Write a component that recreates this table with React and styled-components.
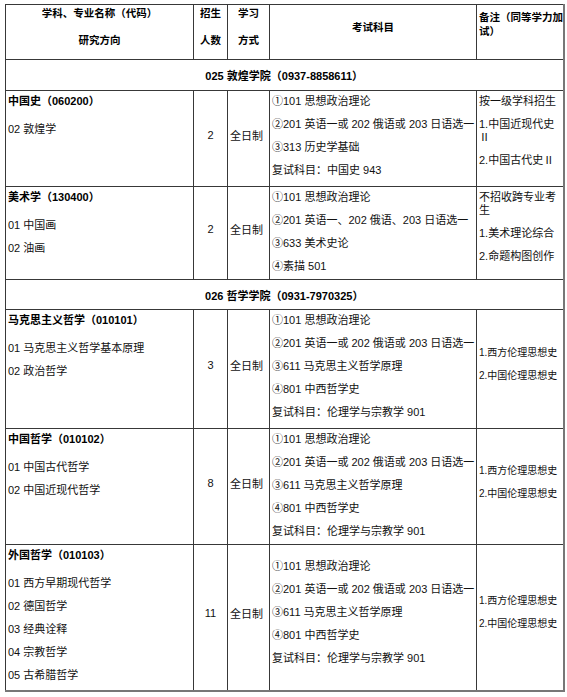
import React from 'react';
import styled, { createGlobalStyle } from 'styled-components';

const GlobalStyle = createGlobalStyle`
  html, body { margin: 0; padding: 0; background: #fff; }
  body {
    font-family: "Liberation Sans", "Noto Sans CJK SC", sans-serif;
    color: #111;
  }
`;

const Page = styled.div`
  padding: 4px 0 0 5px;
`;

const Table = styled.table`
  border-collapse: collapse;
  table-layout: fixed;
  width: 558px;
  border-right: 2px solid #777;
  border-bottom: 2px solid #777;
`;

const Row = styled.tr`
  height: ${({ $h }) => $h}px;
`;

const Cell = styled.td`
  border: 1px solid #383838;
  padding: ${({ $valign }) => ($valign === 'middle' ? '0 2px 8px' : '0 2px')};
  vertical-align: ${({ $valign }) => $valign || 'top'};
  text-align: ${({ $align }) => $align || 'left'};
  font-size: ${({ $small }) => ($small ? '10px' : '11px')};
  white-space: ${({ $nowrap }) => ($nowrap ? 'nowrap' : 'normal')};
  overflow: visible;
`;

const HeadCell = styled.th`
  border: 1px solid #383838;
  padding: ${({ $pad }) => $pad || '0 2px'};
  vertical-align: top;
  text-align: ${({ $align }) => $align || 'center'};
  font-size: 10.5px;
  font-weight: 700;
  line-height: 13.5px;
  white-space: nowrap;
  color: #000;
`;

const HeadLine = styled.div`
  line-height: 13px;
  padding: 2px 0 12px;
`;

const SectionCell = styled.td`
  border: 1px solid #383838;
  text-align: center;
  vertical-align: middle;
  font-size: 11px;
  font-weight: 700;
  color: #000;
`;

const Line = styled.div`
  line-height: 13px;
  padding: ${({ $title }) => ($title ? '4px 0 11px' : '4px 0 6px')};
  font-weight: ${({ $title }) => ($title ? 700 : 400)};
  color: ${({ $title }) => ($title ? '#000' : '#111')};
`;

const Number = styled.span`
  font-size: 11px;
`;

const sections = [
  {
    title: '025 敦煌学院（0937-8858611）',
    h: 31,
    majors: [
      {
        name: '中国史（060200）',
        directions: ['02 敦煌学'],
        count: '2',
        exams: ['①101 思想政治理论', '②201 英语一或 202 俄语或 203 日语选一', '③313 历史学基础', '复试科目：中国史 943'],
        notes: ['按一级学科招生', '1.中国近现代史Ⅱ', '2.中国古代史Ⅱ'],
        h: 96,
      },
      {
        name: '美术学（130400）',
        directions: ['01 中国画', '02 油画'],
        count: '2',
        exams: ['①101 思想政治理论', '②201 英语一、202 俄语、203 日语选一', '③633 美术史论', '④素描 501'],
        notes: ['不招收跨专业考生', '1.美术理论综合', '2.命题构图创作'],
        h: 91,
      },
    ],
  },
  {
    title: '026 哲学学院（0931-7970325）',
    h: 30,
    majors: [
      {
        name: '马克思主义哲学（010101）',
        directions: ['01 马克思主义哲学基本原理', '02 政治哲学'],
        count: '3',
        exams: ['①101 思想政治理论', '②201 英语一或 202 俄语或 203 日语选一', '③611 马克思主义哲学原理', '④801 中西哲学史', '复试科目：伦理学与宗教学 901'],
        notes: ['1.西方伦理思想史', '2.中国伦理思想史'],
        noteAlign: 'middle',
        smallNotes: true,
        h: 119,
      },
      {
        name: '中国哲学（010102）',
        directions: ['01 中国古代哲学', '02 中国近现代哲学'],
        count: '8',
        exams: ['①101 思想政治理论', '②201 英语一或 202 俄语或 203 日语选一', '③611 马克思主义哲学原理', '④801 中西哲学史', '复试科目：伦理学与宗教学 901'],
        notes: ['1.西方伦理思想史', '2.中国伦理思想史'],
        noteAlign: 'middle',
        smallNotes: true,
        h: 116,
      },
      {
        name: '外国哲学（010103）',
        directions: ['01 西方早期现代哲学', '02 德国哲学', '03 经典诠释', '04 宗教哲学', '05 古希腊哲学'],
        count: '11',
        exams: ['①101 思想政治理论', '②201 英语一或 202 俄语或 203 日语选一', '③611 马克思主义哲学原理', '④801 中西哲学史', '复试科目：伦理学与宗教学 901'],
        notes: ['1.西方伦理思想史', '2.中国伦理思想史'],
        examAlign: 'middle',
        noteAlign: 'middle',
        smallNotes: true,
        h: 146,
      },
    ],
  },
];

const MajorRow = ({ major }) => (
  <Row $h={major.h}>
    <Cell>
      <Line $title>{major.name}</Line>
      {major.directions.map((d) => (
        <Line key={d}>{d}</Line>
      ))}
    </Cell>
    <Cell $align="center" $valign="middle">
      <Number>{major.count}</Number>
    </Cell>
    <Cell $valign="middle">全日制</Cell>
    <Cell $valign={major.examAlign} $nowrap>
      {major.exams.map((e) => (
        <Line key={e}>{e}</Line>
      ))}
    </Cell>
    <Cell $valign={major.noteAlign} $small={major.smallNotes}>
      {major.notes.map((n) => (
        <Line key={n}>{n}</Line>
      ))}
    </Cell>
  </Row>
);

const App = () => (
  <>
    <GlobalStyle />
    <Page>
      <Table>
        <colgroup>
          <col style={{ width: 188 }} />
          <col style={{ width: 34 }} />
          <col style={{ width: 42 }} />
          <col style={{ width: 207 }} />
          <col style={{ width: 87 }} />
        </colgroup>
        <thead>
          <Row $h={54}>
            <HeadCell>
              <HeadLine>学科、专业名称（代码）</HeadLine>
              <HeadLine>研究方向</HeadLine>
            </HeadCell>
            <HeadCell>
              <HeadLine>招生</HeadLine>
              <HeadLine>人数</HeadLine>
            </HeadCell>
            <HeadCell>
              <HeadLine>学习</HeadLine>
              <HeadLine>方式</HeadLine>
            </HeadCell>
            <HeadCell $pad="16px 2px 0">考试科目</HeadCell>
            <HeadCell $align="left" $pad="6px 0 0 2px">
              备注（同等学力加<br />试）
            </HeadCell>
          </Row>
        </thead>
        <tbody>
          {sections.map((s) => (
            <React.Fragment key={s.title}>
              <Row $h={s.h}>
                <SectionCell colSpan={5}>{s.title}</SectionCell>
              </Row>
              {s.majors.map((m) => (
                <MajorRow key={m.name} major={m} />
              ))}
            </React.Fragment>
          ))}
        </tbody>
      </Table>
    </Page>
  </>
);

export default App;
